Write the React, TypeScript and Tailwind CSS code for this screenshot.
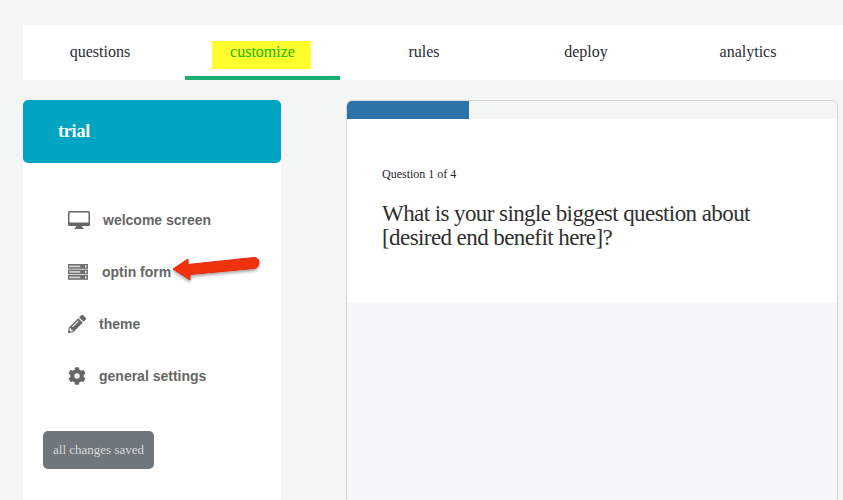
import { ReactNode } from "react";
import { FaCog, FaPencilAlt } from "react-icons/fa";

const tabs = ["questions", "customize", "rules", "deploy", "analytics"];

const DesktopIcon = () => (
  <svg width="22" height="18" viewBox="0 0 22 18" className="text-[#666666]">
    <path
      fillRule="evenodd"
      fill="currentColor"
      d="M1.5 0 H20.5 A1.5 1.5 0 0 1 22 1.5 V13.5 A1.5 1.5 0 0 1 20.5 15 H14 V16.5 H15.5 V18 H6.5 V16.5 H8 V15 H1.5 A1.5 1.5 0 0 1 0 13.5 V1.5 A1.5 1.5 0 0 1 1.5 0 Z M1.5 1.5 V11.5 H20.5 V1.5 Z"
    />
  </svg>
);

const ServerIcon = () => (
  <svg width="20" height="16" viewBox="0 0 20 16" className="text-[#707070]">
    {[0, 5.5, 11].map((y) => (
      <g key={y}>
        <rect x="0" y={y} width="20" height="4.8" fill="currentColor" />
        <rect x="1.2" y={y + 1.6} width="11" height="1.6" fill="#d8d8d8" />
        <rect x="17" y={y + 1.4} width="1.6" height="2" fill="#e4e4e4" />
      </g>
    ))}
  </svg>
);

const SideItem = ({ icon, label, gap }: { icon: ReactNode; label: string; gap: string }) => (
  <div className={`flex h-[52px] items-center pl-[45px] ${gap}`}>
    {icon}
    <span className="font-['Liberation_Sans',sans-serif] text-[14px] font-bold text-[#666666]">{label}</span>
  </div>
);

const RedArrow = () => (
  <svg className="absolute left-[170px] top-[252px]" width="94" height="36" viewBox="0 0 94 36">
    <defs>
      <filter id="arrowShadow" x="-20%" y="-30%" width="140%" height="170%">
        <feDropShadow dx="0" dy="2" stdDeviation="1.5" floodColor="#000000" floodOpacity="0.35" />
      </filter>
    </defs>
    <path
      d="M3 17 L18 7 L18 12.5 L84 5.5 C90.5 5 90.5 16 84 16.5 L20 22.5 L20 28 Z"
      fill="#f0300f"
      stroke="#e02a0a"
      strokeWidth="1"
      strokeLinejoin="round"
      filter="url(#arrowShadow)"
    />
  </svg>
);

export default function App() {
  return (
    <div className="relative h-[500px] w-[843px] overflow-hidden bg-[#f4f6f5] font-['Liberation_Serif',serif]">
      {/* Top tabs */}
      <div className="ml-[23px] flex pt-[25px]">
        <div className="h-[55px] w-[820px] bg-white">
          <div className="-ml-1 grid h-full grid-cols-[repeat(5,162px)]">
            {tabs.map((tab) => (
              <div key={tab} className="relative flex h-full justify-center pt-[16px]">
                {tab === "customize" ? (
                  <>
                    <span className="-ml-[1px] flex h-[28px] w-[99px] items-start justify-center bg-[#ffff2e] pl-[2px] text-[16px] leading-[21px] text-[#22b000]">
                      {tab}
                    </span>
                    <div className="absolute bottom-0 left-[4px] h-[4px] w-[155px] bg-[#1bb070]" />
                  </>
                ) : (
                  <span className="text-[16px] leading-[21px] text-[#2b2b33]">{tab}</span>
                )}
              </div>
            ))}
          </div>
        </div>
      </div>

      <div className="ml-[23px] mt-[20px] flex items-start">
        {/* Sidebar */}
        <div className="h-[420px] w-[258px] bg-white">
          <div className="flex h-[63px] items-center rounded-[5px] bg-[#00a5c2] pl-[35px] text-[18px] font-bold tracking-[-0.2px] text-white">
            trial
          </div>
          <div className="pt-[31px]">
            <SideItem label="welcome screen" gap="gap-[13px]" icon={<DesktopIcon />} />
            <SideItem label="optin form" gap="gap-[14px]" icon={<ServerIcon />} />
            <SideItem label="theme" gap="gap-[13px]" icon={<FaPencilAlt className="h-[18px] w-[18px] text-[#666666]" />} />
            <SideItem label="general settings" gap="gap-[13px]" icon={<FaCog className="h-[18px] w-[18px] text-[#666666]" />} />
          </div>
          <div className="ml-[20px] mt-[29px] flex h-[38px] w-[111px] items-center justify-center rounded-[5px] bg-[#6f767c] text-[13px] text-[#d5d8da]">
            all changes saved
          </div>
        </div>

        {/* Preview */}
        <div className="ml-[65px] h-[420px] w-[492px] rounded-t-[6px] border border-[#d4d6d6] bg-[#f6f7f8]">
          <div className="h-[18px] rounded-t-[5px] bg-[#f4f5f5]">
            <div className="h-full w-[122px] rounded-tl-[5px] bg-[#2b72a8] bg-[repeating-linear-gradient(135deg,#2b72a8_0px,#2b72a8_2px,#2c74aa_2px,#2c74aa_4px)]" />
          </div>
          <div className="h-[184px] bg-white pl-[35px] pt-[47px]">
            <div className="text-[12px] leading-[16px] text-[#26262e]">Question 1 of 4</div>
            <div className="mt-[20px] text-[23px] leading-[24px] tracking-[-0.58px] text-[#2f2f2f]">
              What is your single biggest question about
              <br />
              [desired end benefit here]?
            </div>
          </div>
        </div>
      </div>

      <RedArrow />
    </div>
  );
}
